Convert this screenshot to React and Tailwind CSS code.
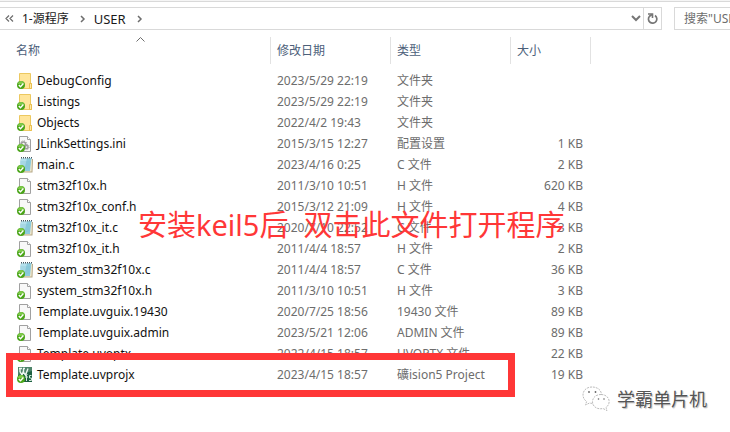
const files = [
  { name: "DebugConfig", date: "2023/5/29 22:19", type: "文件夹", size: "", icon: "folder" },
  { name: "Listings", date: "2023/5/29 22:19", type: "文件夹", size: "", icon: "folder" },
  { name: "Objects", date: "2022/4/2 19:43", type: "文件夹", size: "", icon: "folder" },
  { name: "JLinkSettings.ini", date: "2015/3/15 12:27", type: "配置设置", size: "1 KB", icon: "ini" },
  { name: "main.c", date: "2023/4/16 0:25", type: "C 文件", size: "2 KB", icon: "notepad" },
  { name: "stm32f10x.h", date: "2011/3/10 10:51", type: "H 文件", size: "620 KB", icon: "doc" },
  { name: "stm32f10x_conf.h", date: "2015/3/12 21:09", type: "H 文件", size: "4 KB", icon: "doc" },
  { name: "stm32f10x_it.c", date: "2020/7/10 22:52", type: "C 文件", size: "3 KB", icon: "notepad" },
  { name: "stm32f10x_it.h", date: "2011/4/4 18:57", type: "H 文件", size: "2 KB", icon: "doc" },
  { name: "system_stm32f10x.c", date: "2011/4/4 18:57", type: "C 文件", size: "36 KB", icon: "notepad" },
  { name: "system_stm32f10x.h", date: "2011/3/10 10:51", type: "H 文件", size: "3 KB", icon: "doc" },
  { name: "Template.uvguix.19430", date: "2020/7/25 18:56", type: "19430 文件", size: "89 KB", icon: "doc" },
  { name: "Template.uvguix.admin", date: "2023/5/21 12:06", type: "ADMIN 文件", size: "89 KB", icon: "doc" },
  { name: "Template.uvoptx", date: "2022/4/15 18:57", type: "UVOPTX 文件", size: "22 KB", icon: "doc" },
  { name: "Template.uvprojx", date: "2023/4/15 18:57", type: "礦ision5 Project", size: "19 KB", icon: "keil" },
];

function Folder() {
  return (
    <>
      <path d="M2.5.5h11v10h1v5h-12z" fill="#ffe59a" stroke="#ecc860" />
      <path d="M12.5 10.5h2v5h-2z" fill="#ffe9a9" stroke="#e8bf4e" />
    </>
  );
}

function Page() {
  return (
    <>
      <path d="M2.5.5h8l3 3v12h-11z" fill="#f8f8f8" stroke="#a0a0a0" />
      <path d="M10.5.5v3h3" fill="#fff" stroke="#a0a0a0" />
    </>
  );
}

function Gear() {
  return (
    <g fill="none" stroke="#9b9b9b">
      <circle cx="6.5" cy="8" r="2" strokeWidth="1.5" />
      <circle cx="6.5" cy="8" r="3.2" strokeWidth="1" strokeDasharray="1.2 1.3" />
      <circle cx="9.5" cy="11" r="1.6" strokeWidth="1.5" />
      <circle cx="9.5" cy="11" r="2.7" strokeWidth="1" strokeDasharray="1 1.1" />
    </g>
  );
}

function Notepad() {
  return (
    <>
      <path d="M4 2h12l-.5 13.5H3z" fill="#b5a887" />
      <path d="M4 2h11l-.5 12.5H3z" fill="#f3ead0" />
      <path d="M4 1h10.500l-1.500 13H2z" fill="#8ccbdd" />
      <path d="M4 1h6L7 14H2z" fill="#b4e0ec" />
      <path d="M4 5h9M4 7h9M4 9h9M4 11h9" stroke="#7cbccf" strokeWidth=".5" />
      <path d="M4 .5h11" stroke="#465a63" strokeDasharray="1 1" />
      <path d="M4 1.500h11" stroke="#8aa0a8" strokeDasharray="1 1" />
    </>
  );
}

function Keil() {
  return (
    <>
      <path d="M1 0h14v15H1z" fill="#1d6141" />
      <path d="M1 0h14v4L1 8z" fill="#4d846a" />
      <path d="M3 1.500v3l2 3.500 1.500-4M6.500 1.500v4L8.500 8l2.500-6.500M2 1.500h3M6 1.500h2" fill="none" stroke="#eef6f1" strokeWidth="1.400" />
      <path d="M10.500 7.500h-1V14M8 10h3M14.500 8.500h-2v2.500h2v2.500H12" fill="none" stroke="#d4e9dc" />
    </>
  );
}

function FileIcon({ kind }) {
  return (
    <svg viewBox="0 0 16 16" className="size-4 shrink-0" aria-hidden="true">
      {kind === "folder" && <Folder />}
      {(kind === "doc" || kind === "ini") && <Page />}
      {kind === "ini" && <Gear />}
      {kind === "notepad" && <Notepad />}
      {kind === "keil" && <Keil />}
      <circle cx="4" cy="12" r="4" fill="#4aa518" />
      <path d="M1 11a3 3 0 0 1 6 0z" fill="#7cc948" />
      <path d="M1.800 12l1.700 1.700L6.400 10.600" fill="none" stroke="#fff" strokeWidth="1.400" />
    </svg>
  );
}

function Chevron() {
  return (
    <svg viewBox="0 0 6 8" className="h-2 w-1.5" aria-hidden="true">
      <path d="M1 1l3 3-3 3" fill="none" stroke="#6d6d6d" strokeWidth="1.500" />
    </svg>
  );
}

function AddressBar() {
  return (
    <div className="flex h-[23px] gap-3 text-[#1a1a1a]">
      <nav className="flex min-w-0 flex-1 items-center border border-l-0 border-[#d9d9d9]">
        <button aria-label="上级文件夹" className="ml-[5px] mr-2">
          <svg viewBox="0 0 9 7" className="h-[7px] w-[9px]">
            <path d="M4 .5l-3 3 3 3M8 .5l-3 3 3 3" fill="none" stroke="#6d6d6d" strokeWidth="1.200" />
          </svg>
        </button>
        <button className="mr-[11px]">1-源程序</button>
        <Chevron />
        <button className="ml-2 mr-[11px] text-[13px]">USER</button>
        <Chevron />
        <button aria-label="历史记录" className="ml-auto mr-0.5">
          <svg viewBox="0 0 10 7" className="h-[7px] w-2.5">
            <path d="M1 1l4 4 4-4" fill="none" stroke="#767676" strokeWidth="2" />
          </svg>
        </button>
        <button aria-label="刷新" className="flex h-full w-[18px] items-center justify-center border-l border-[#d9d9d9]">
          <svg viewBox="0 0 11 12" className="h-3 w-[11px]">
            <path d="M8 2.500A4.200 4.200 0 1 1 2.500 3.200L5 1.500" fill="none" stroke="#767676" strokeWidth="1.700" />
            <path d="M1 1h4.500v4" fill="none" stroke="#767676" strokeWidth="1.600" />
          </svg>
        </button>
      </nav>
      <input
        type="text"
        aria-label="搜索"
        placeholder={'搜索"USER"'}
        className="w-14 border border-r-0 border-[#d9d9d9] pl-[9px] outline-none placeholder:text-[#6d6d6d]"
      />
    </div>
  );
}

function FileTable() {
  return (
    <table className="w-[591px] table-fixed border-separate border-spacing-0 text-left text-[#6d6d6d]">
      <colgroup>
        <col className="w-[271px]" />
        <col className="w-[120px]" />
        <col className="w-[120px]" />
        <col className="w-[80px]" />
      </colgroup>
      <thead className="text-[#4c607a]">
        <tr className="h-[27px]">
          <th className="relative border-r border-[#e2e2e2] pl-4 font-normal">
            <button>名称</button>
            <svg viewBox="0 0 9 5" className="absolute left-[136px] top-0 h-[5px] w-[9px]" aria-hidden="true">
              <path d="M.5 4.500l4-4 4 4" fill="none" stroke="#6d6d6d" />
            </svg>
          </th>
          <th className="border-r border-[#e2e2e2] pl-1.5 font-normal"><button>修改日期</button></th>
          <th className="border-r border-[#e2e2e2] pl-1.5 font-normal"><button>类型</button></th>
          <th className="border-r border-[#e2e2e2] pl-1.5 font-normal"><button>大小</button></th>
        </tr>
      </thead>
      <tbody>
        <tr className="h-1.5" aria-hidden="true"><td colSpan={4} /></tr>
        {files.map((f) => (
          <tr key={f.name} className="h-[21px]">
            <td className="pl-[17px]">
              <div className="flex items-center gap-1 text-[#111]">
                <FileIcon kind={f.icon} />
                <span>{f.name}</span>
              </div>
            </td>
            <td className="pl-1.5">{f.date}</td>
            <td className="pl-1.5">{f.type}</td>
            <td className="pr-2 text-right">{f.size}</td>
          </tr>
        ))}
      </tbody>
    </table>
  );
}

function Watermark() {
  return (
    <div className="absolute left-[582px] top-[386px] flex items-center gap-[7px] whitespace-nowrap">
      <svg viewBox="0 0 28 26" className="h-[26px] w-7" aria-hidden="true">
        <g fill="#fff" stroke="#aaa" strokeWidth=".8" strokeDasharray="2 1">
          <path d="M10 1C4.500 1 1 4.500 1 9c0 2.700 1.400 5 3.600 6.500L3.500 19l4-2c6 1.500 12-1.500 12-8 0-5-4-8-9.500-8z" />
          <path d="M19 8.500c-5 0-8.500 3-8.500 7.300 0 5 5 8 10.500 6.700l4 2-1-3c6-4.500 3-13-5-13z" />
        </g>
        <g fill="#666">
          <circle cx="7" cy="6" r=".9" />
          <circle cx="13.500" cy="6" r=".9" />
          <circle cx="16.500" cy="13" r=".8" />
          <circle cx="22" cy="13" r=".8" />
        </g>
      </svg>
      <span className="text-[18px] leading-6 text-[#555] [text-shadow:-1px_-1px_0_#fff,1px_1px_1px_#bbb]">学霸单片机</span>
    </div>
  );
}

export default function App() {
  return (
    <main className="relative min-h-screen overflow-hidden bg-white font-['Noto_Sans','Noto_Sans_CJK_SC',sans-serif] text-[12px] leading-4">
      <div className="mb-[5px] h-0.5 border-b border-[#d9d9d9] bg-[#f5f5f5]" />
      <AddressBar />
      <div className="mt-[7px]">
        <FileTable />
      </div>
      <p className="absolute left-[138px] top-[205px] whitespace-pre text-[29px] leading-10 text-[#ff3737]">
        安装keil5后{"  "}双击此文件打开程序
      </p>
      <div className="absolute left-1.5 top-[353px] h-11 w-[509px] border-[7px] border-[#ff3737]" />
      <Watermark />
    </main>
  );
}
